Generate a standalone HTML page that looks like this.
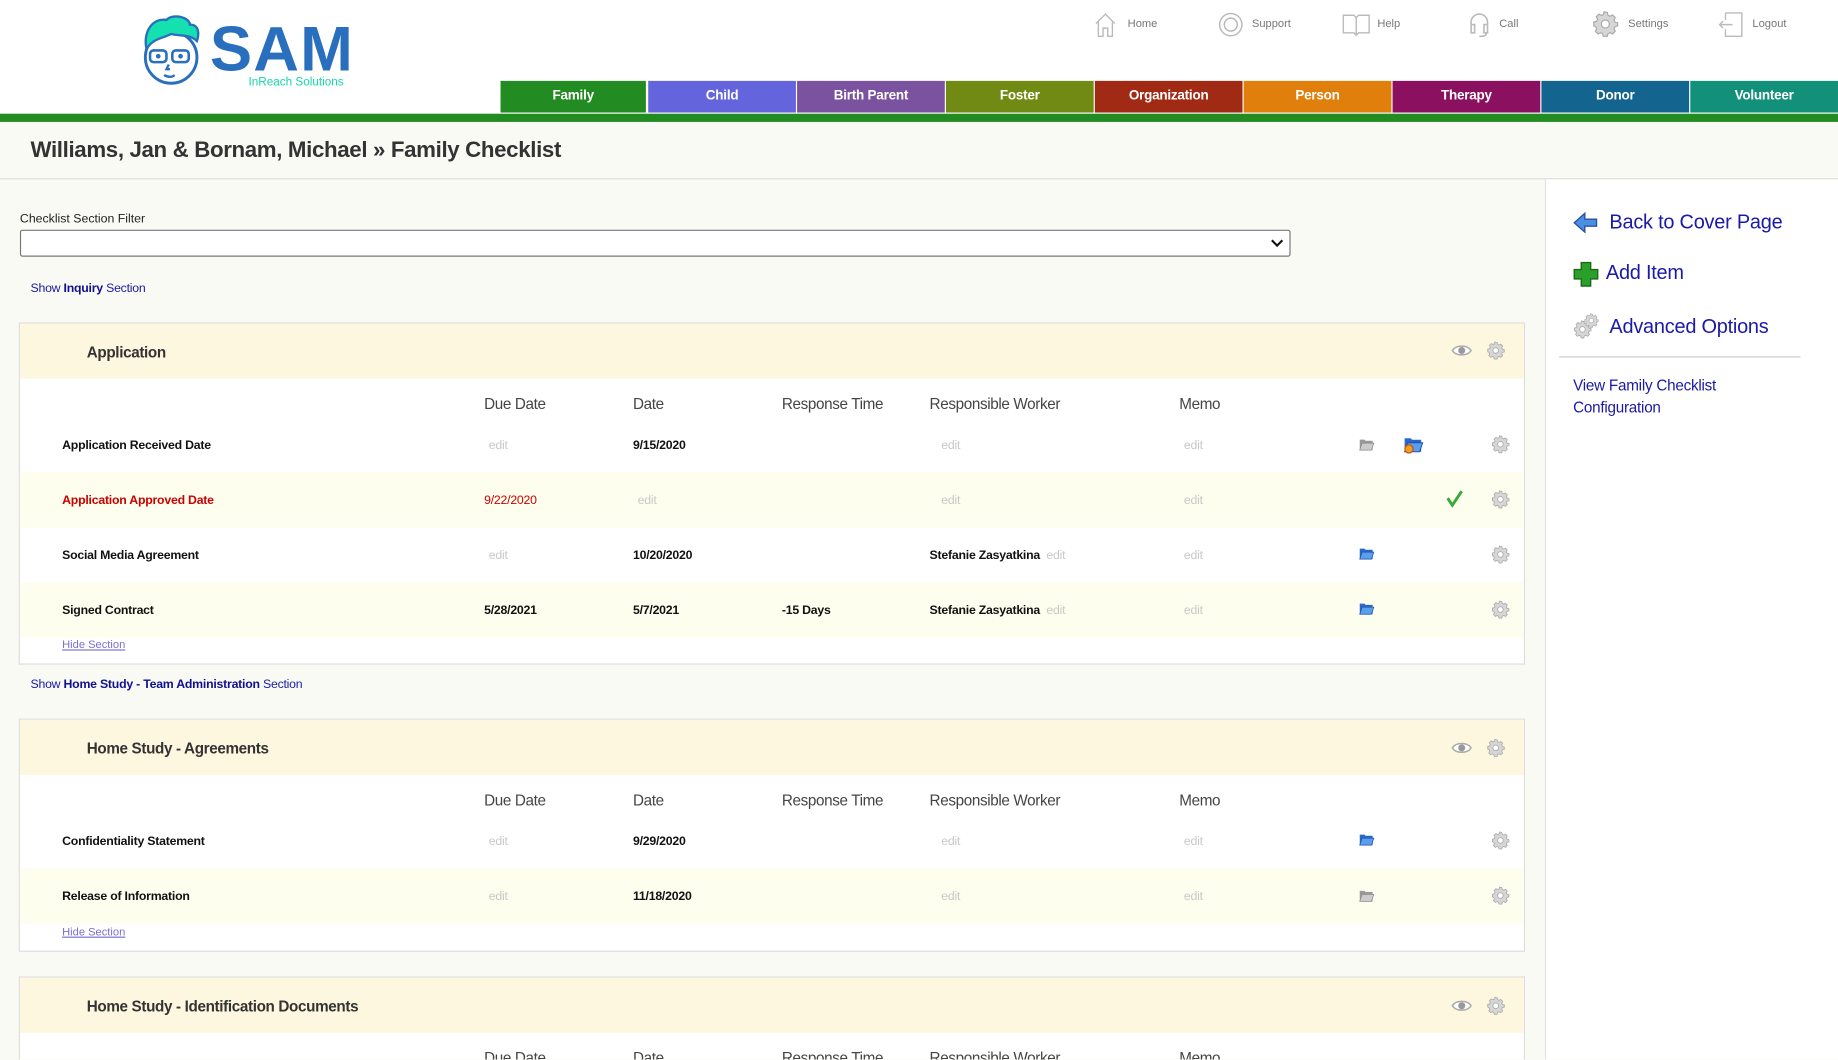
<!DOCTYPE html>
<html><head><meta charset="utf-8">
<style>
*{margin:0;padding:0;box-sizing:border-box}
html,body{width:1838px;height:1060px;overflow:hidden;background:#fafaf5;font-family:"Liberation Sans",Arial,sans-serif}
#w{position:absolute;left:0;top:0;width:1568px;height:904px;overflow:hidden;transform:scale(1.17219);transform-origin:0 0;background:#fafaf5}
.a{position:absolute;white-space:nowrap}
.hdr{position:absolute;left:0;top:0;width:1568px;height:97px;background:#fff}
.tab{position:absolute;top:69px;height:27px;color:#fff;font-weight:bold;font-size:11.5px;text-align:center;line-height:27px;letter-spacing:-0.2px}
.tl{font-size:9.5px;color:#777;top:15px}
.sec{position:absolute;left:16px;width:1285px;background:#fff;border:1px solid #ddd}
.sh{position:absolute;left:0;top:0;width:100%;height:47px;background:#fef7df}
.st{position:absolute;left:57px;top:17px;font-weight:bold;font-size:13px;color:#333;letter-spacing:-0.3px}
.ch{position:absolute;font-size:13px;color:#444;letter-spacing:-0.3px}
.row{position:absolute;left:0;width:100%;height:47px}
.y{background:#fefeef}
.c{position:absolute;top:18px;font-size:10.5px;color:#111;letter-spacing:-0.2px}
.b{font-weight:bold}
.e{color:#c8c8c8;font-weight:normal}
.r{color:#cc0000}
.hide{position:absolute;left:36px;font-size:9.5px;color:#7a6fd0;text-decoration:underline}
.show{position:absolute;left:26px;font-size:10.5px;color:#1a1aa6;letter-spacing:-0.2px}
.show b{color:#101090}
.ico{position:absolute}
.sl{position:absolute;color:#1a1aa6;font-size:17px;letter-spacing:-0.2px}
</style></head><body>
<svg width="0" height="0" style="position:absolute">
<defs>
<symbol id="gear" viewBox="0 0 16 16"><path d="M8 1l1.2.2.4 1.6 1.2.6 1.5-.8 1.6 1.6-.8 1.5.6 1.2 1.6.4V9.2l-1.6.4-.6 1.2.8 1.5-1.6 1.6-1.5-.8-1.2.6-.4 1.6H6.8l-.4-1.6-1.2-.6-1.5.8-1.6-1.6.8-1.5-.6-1.2L1.2 9.2V6.8l1.6-.4.6-1.2-.8-1.5 1.6-1.6 1.5.8 1.2-.6.4-1.6z" fill="#d6d6d6" stroke="#aaa" stroke-width=".7"/><circle cx="8" cy="8" r="2.4" fill="#fff" stroke="#aaa" stroke-width=".7"/></symbol>
<symbol id="eye" viewBox="0 0 18 12"><path d="M1 6C4 1 14 1 17 6C14 11 4 11 1 6z" fill="#fff" stroke="#aaa" stroke-width="1.3"/><circle cx="9" cy="6" r="3" fill="#999"/></symbol>
<symbol id="fb" viewBox="0 0 14 12"><path d="M1 2h4l1 1h6v8H1z" fill="#2a68c8"/><path d="M3 5h10l-2 6H1z" fill="#5a9ef0" stroke="#1d4fa0" stroke-width=".6"/></symbol>
<symbol id="fg" viewBox="0 0 14 12"><path d="M1 2h4l1 1h6v8H1z" fill="#999"/><path d="M3 5h10l-2 6H1z" fill="#ccc" stroke="#888" stroke-width=".6"/></symbol>
</defs></svg>
<div id="w">
<div class="hdr"></div>
<svg class="ico" style="left:118px;top:9px" width="60" height="70" viewBox="0 0 60 70">
<circle cx="28" cy="40" r="22" fill="#fff" stroke="#2a6fbd" stroke-width="2.5"/>
<path d="M7 33C4 18 12 6 24 8C30 2 44 6 44 12C52 12 52 20 50 26C44 20 36 22 28 20C20 24 12 24 7 33z" fill="#14e0b0" stroke="#2a6fbd" stroke-width="2"/>
<rect x="10" y="34" width="14" height="10" rx="3" fill="none" stroke="#2a6fbd" stroke-width="2.2"/>
<rect x="29" y="34" width="14" height="10" rx="3" fill="none" stroke="#2a6fbd" stroke-width="2.2"/>
<circle cx="17" cy="39" r="2" fill="#2a6fbd"/><circle cx="36" cy="39" r="2" fill="#2a6fbd"/>
<path d="M26 46l-2 4h3M22 55c3 2 7 2 9 0" fill="none" stroke="#2a6fbd" stroke-width="2"/>
</svg>
<div class="a" style="left:179px;top:12px;font-size:54px;font-weight:bold;color:#2a6fbd;letter-spacing:1px;line-height:60px">SAM</div>
<div class="a" style="left:212px;top:65px;font-size:10px;color:#14d8a6">InReach Solutions</div>
<svg class="ico" style="left:933px;top:10px" width="20" height="22" viewBox="0 0 20 22"><path d="M2 10L10 2l8 8M4 8v13h4v-7h4v7h4V8" fill="none" stroke="#bbb" stroke-width="1.2"/></svg>
<div class="a tl" style="left:962px">Home</div>
<svg class="ico" style="left:1039px;top:10px" width="22" height="22"><circle cx="11" cy="11" r="9.5" fill="none" stroke="#bbb" stroke-width="1.3"/><circle cx="11" cy="11" r="5.5" fill="none" stroke="#bbb" stroke-width="1.3"/></svg>
<div class="a tl" style="left:1068px">Support</div>
<svg class="ico" style="left:1145px;top:11px" width="24" height="20"><path d="M1 2h9l2 2 2-2h9v15h-9l-2 2-2-2H1zM12 4v15" fill="none" stroke="#bbb" stroke-width="1.2"/></svg>
<div class="a tl" style="left:1175px">Help</div>
<svg class="ico" style="left:1252px;top:10px" width="20" height="22"><path d="M3 13V9a7 7 0 0 1 14 0v4M3 11h3v7H3zM14 11h3v7h-3zM16 18c0 3-3 3-6 3" fill="none" stroke="#bbb" stroke-width="1.4"/></svg>
<div class="a tl" style="left:1279px">Call</div>
<svg class="ico" style="left:1358px;top:9px" width="23" height="23"><use href="#gear"/></svg>
<div class="a tl" style="left:1389px">Settings</div>
<svg class="ico" style="left:1466px;top:10px" width="22" height="22"><path d="M6 1h14v20H6v-6M6 7V1M12 11H1m3-3L1 11l3 3" fill="none" stroke="#bbb" stroke-width="1.2"/></svg>
<div class="a tl" style="left:1495px">Logout</div>
<div class="tab" style="left:427px;width:124px;background:#228b22">Family</div>
<div class="tab" style="left:553px;width:126px;background:#6464dd">Child</div>
<div class="tab" style="left:680px;width:126px;background:#7a52a0">Birth Parent</div>
<div class="tab" style="left:807px;width:126px;background:#718a14">Foster</div>
<div class="tab" style="left:934px;width:126px;background:#a02a14">Organization</div>
<div class="tab" style="left:1061px;width:126px;background:#e07f0c">Person</div>
<div class="tab" style="left:1188px;width:126px;background:#8b1160">Therapy</div>
<div class="tab" style="left:1315px;width:126px;background:#13648f">Donor</div>
<div class="tab" style="left:1442px;width:126px;background:#139079">Volunteer</div>
<div class="a" style="left:0;top:97px;width:1568px;height:7px;background:#228b22"></div>
<div class="a" style="left:26px;top:118px;font-size:19px;font-weight:bold;color:#333;letter-spacing:-0.3px">Williams, Jan &amp; Bornam, Michael » Family Checklist</div>
<div class="a" style="left:0;top:152px;width:1568px;height:1px;background:#ddd"></div>
<div class="a" style="left:1318px;top:153px;width:250px;height:751px;background:#fff;border-left:1px solid #e3e3e3"></div>
<svg class="ico" style="left:1342px;top:180px" width="22" height="20"><path d="M1 10L10 2v5h10v6H10v5z" fill="#4a90e2" stroke="#3050a0" stroke-width="1.2"/></svg>
<div class="sl" style="left:1373px;top:180px">Back to Cover Page</div>
<svg class="ico" style="left:1342px;top:223px" width="22" height="22"><path d="M7 1h8v6h6v8h-6v6H7v-6H1V7h6z" fill="#2aa02a" stroke="#1a6a1a" stroke-width="1.2"/></svg>
<div class="sl" style="left:1370px;top:223px">Add Item</div>
<svg class="ico" style="left:1342px;top:267px" width="24" height="24"><use href="#gear" x="0" y="6" width="16" height="16"/><use href="#gear" x="9" y="0" width="13" height="13"/></svg>
<div class="sl" style="left:1373px;top:269px">Advanced Options</div>
<div class="a" style="left:1330px;top:304px;width:206px;height:1px;background:#ccc"></div>
<div class="a" style="left:1342px;top:319px;font-size:13px;color:#1a1aa6;line-height:19px;letter-spacing:-0.2px">View Family Checklist<br>Configuration</div>
<div class="a" style="left:17px;top:181px;font-size:10.5px;color:#222">Checklist Section Filter</div>
<div class="a" style="left:17px;top:196px;width:1084px;height:23px;background:#fff;border:1px solid #777;border-radius:2px"></div>
<svg class="ico" style="left:1084px;top:203px" width="11" height="9"><path d="M1 2l4.5 4.5L10 2" fill="none" stroke="#111" stroke-width="1.8"/></svg>
<div class="show" style="top:240px">Show <b>Inquiry</b> Section</div>

<div class="sec" style="top:275px;height:292px">
<div class="sh"><div class="st">Application</div>
<svg class="ico" style="left:1221px;top:17px" width="18" height="12"><use href="#eye"/></svg>
<svg class="ico" style="left:1251px;top:15px" width="16" height="16"><use href="#gear"/></svg></div>
<div class="ch" style="left:396px;top:61px">Due Date</div><div class="ch" style="left:523px;top:61px">Date</div><div class="ch" style="left:650px;top:61px">Response Time</div><div class="ch" style="left:776px;top:61px">Responsible Worker</div><div class="ch" style="left:989px;top:61px">Memo</div>
<div class="row" style="top:80px"><div class="c b" style="left:36px">Application Received Date</div><div class="c e" style="left:400px">edit</div><div class="c b" style="left:523px">9/15/2020</div><div class="c e" style="left:786px">edit</div><div class="c e" style="left:993px">edit</div>
<svg class="ico" style="left:1142px;top:17px" width="14" height="12"><use href="#fg"/></svg><svg class="ico" style="left:1180px;top:15px" width="18" height="16"><use href="#fb"/><circle cx="5" cy="12" r="3.5" fill="#f0a020" stroke="#c05010"/></svg><svg class="ico" style="left:1255px;top:15px" width="16" height="16"><use href="#gear"/></svg></div>
<div class="row y" style="top:127px"><div class="c b r" style="left:36px">Application Approved Date</div><div class="c r" style="left:396px">9/22/2020</div><div class="c e" style="left:527px">edit</div><div class="c e" style="left:786px">edit</div><div class="c e" style="left:993px">edit</div>
<svg class="ico" style="left:1216px;top:14px" width="16" height="16"><path d="M2 8l4 6L14 2" fill="none" stroke="#3aa83a" stroke-width="2.5"/></svg><svg class="ico" style="left:1255px;top:15px" width="16" height="16"><use href="#gear"/></svg></div>
<div class="row" style="top:174px"><div class="c b" style="left:36px">Social Media Agreement</div><div class="c e" style="left:400px">edit</div><div class="c b" style="left:523px">10/20/2020</div><div class="c b" style="left:776px">Stefanie Zasyatkina <span class="e">&nbsp;edit</span></div><div class="c e" style="left:993px">edit</div>
<svg class="ico" style="left:1142px;top:16px" width="14" height="12"><use href="#fb"/></svg><svg class="ico" style="left:1255px;top:15px" width="16" height="16"><use href="#gear"/></svg></div>
<div class="row y" style="top:221px"><div class="c b" style="left:36px">Signed Contract</div><div class="c b" style="left:396px">5/28/2021</div><div class="c b" style="left:523px">5/7/2021</div><div class="c b" style="left:650px">-15 Days</div><div class="c b" style="left:776px">Stefanie Zasyatkina <span class="e">&nbsp;edit</span></div><div class="c e" style="left:993px">edit</div>
<svg class="ico" style="left:1142px;top:16px" width="14" height="12"><use href="#fb"/></svg><svg class="ico" style="left:1255px;top:15px" width="16" height="16"><use href="#gear"/></svg></div>
<div class="hide" style="top:269px">Hide Section</div>
</div>
<div class="show" style="top:578px">Show <b>Home Study - Team Administration</b> Section</div>

<div class="sec" style="top:613px;height:199px">
<div class="sh"><div class="st">Home Study - Agreements</div>
<svg class="ico" style="left:1221px;top:18px" width="18" height="12"><use href="#eye"/></svg>
<svg class="ico" style="left:1251px;top:16px" width="16" height="16"><use href="#gear"/></svg></div>
<div class="ch" style="left:396px;top:61px">Due Date</div><div class="ch" style="left:523px;top:61px">Date</div><div class="ch" style="left:650px;top:61px">Response Time</div><div class="ch" style="left:776px;top:61px">Responsible Worker</div><div class="ch" style="left:989px;top:61px">Memo</div>
<div class="row" style="top:80px"><div class="c b" style="left:36px">Confidentiality Statement</div><div class="c e" style="left:400px">edit</div><div class="c b" style="left:523px">9/29/2020</div><div class="c e" style="left:786px">edit</div><div class="c e" style="left:993px">edit</div>
<svg class="ico" style="left:1142px;top:16px" width="14" height="12"><use href="#fb"/></svg><svg class="ico" style="left:1255px;top:15px" width="16" height="16"><use href="#gear"/></svg></div>
<div class="row y" style="top:127px"><div class="c b" style="left:36px">Release of Information</div><div class="c e" style="left:400px">edit</div><div class="c b" style="left:523px">11/18/2020</div><div class="c e" style="left:786px">edit</div><div class="c e" style="left:993px">edit</div>
<svg class="ico" style="left:1142px;top:17px" width="14" height="12"><use href="#fg"/></svg><svg class="ico" style="left:1255px;top:15px" width="16" height="16"><use href="#gear"/></svg></div>
<div class="hide" style="top:176px">Hide Section</div>
</div>

<div class="sec" style="top:833px;height:71px;border-bottom:none;overflow:hidden">
<div class="sh"><div class="st">Home Study - Identification Documents</div>
<svg class="ico" style="left:1221px;top:18px" width="18" height="12"><use href="#eye"/></svg>
<svg class="ico" style="left:1251px;top:16px" width="16" height="16"><use href="#gear"/></svg></div>
<div class="ch" style="left:396px;top:61px">Due Date</div><div class="ch" style="left:523px;top:61px">Date</div><div class="ch" style="left:650px;top:61px">Response Time</div><div class="ch" style="left:776px;top:61px">Responsible Worker</div><div class="ch" style="left:989px;top:61px">Memo</div>
</div>
</div>
</body></html>
